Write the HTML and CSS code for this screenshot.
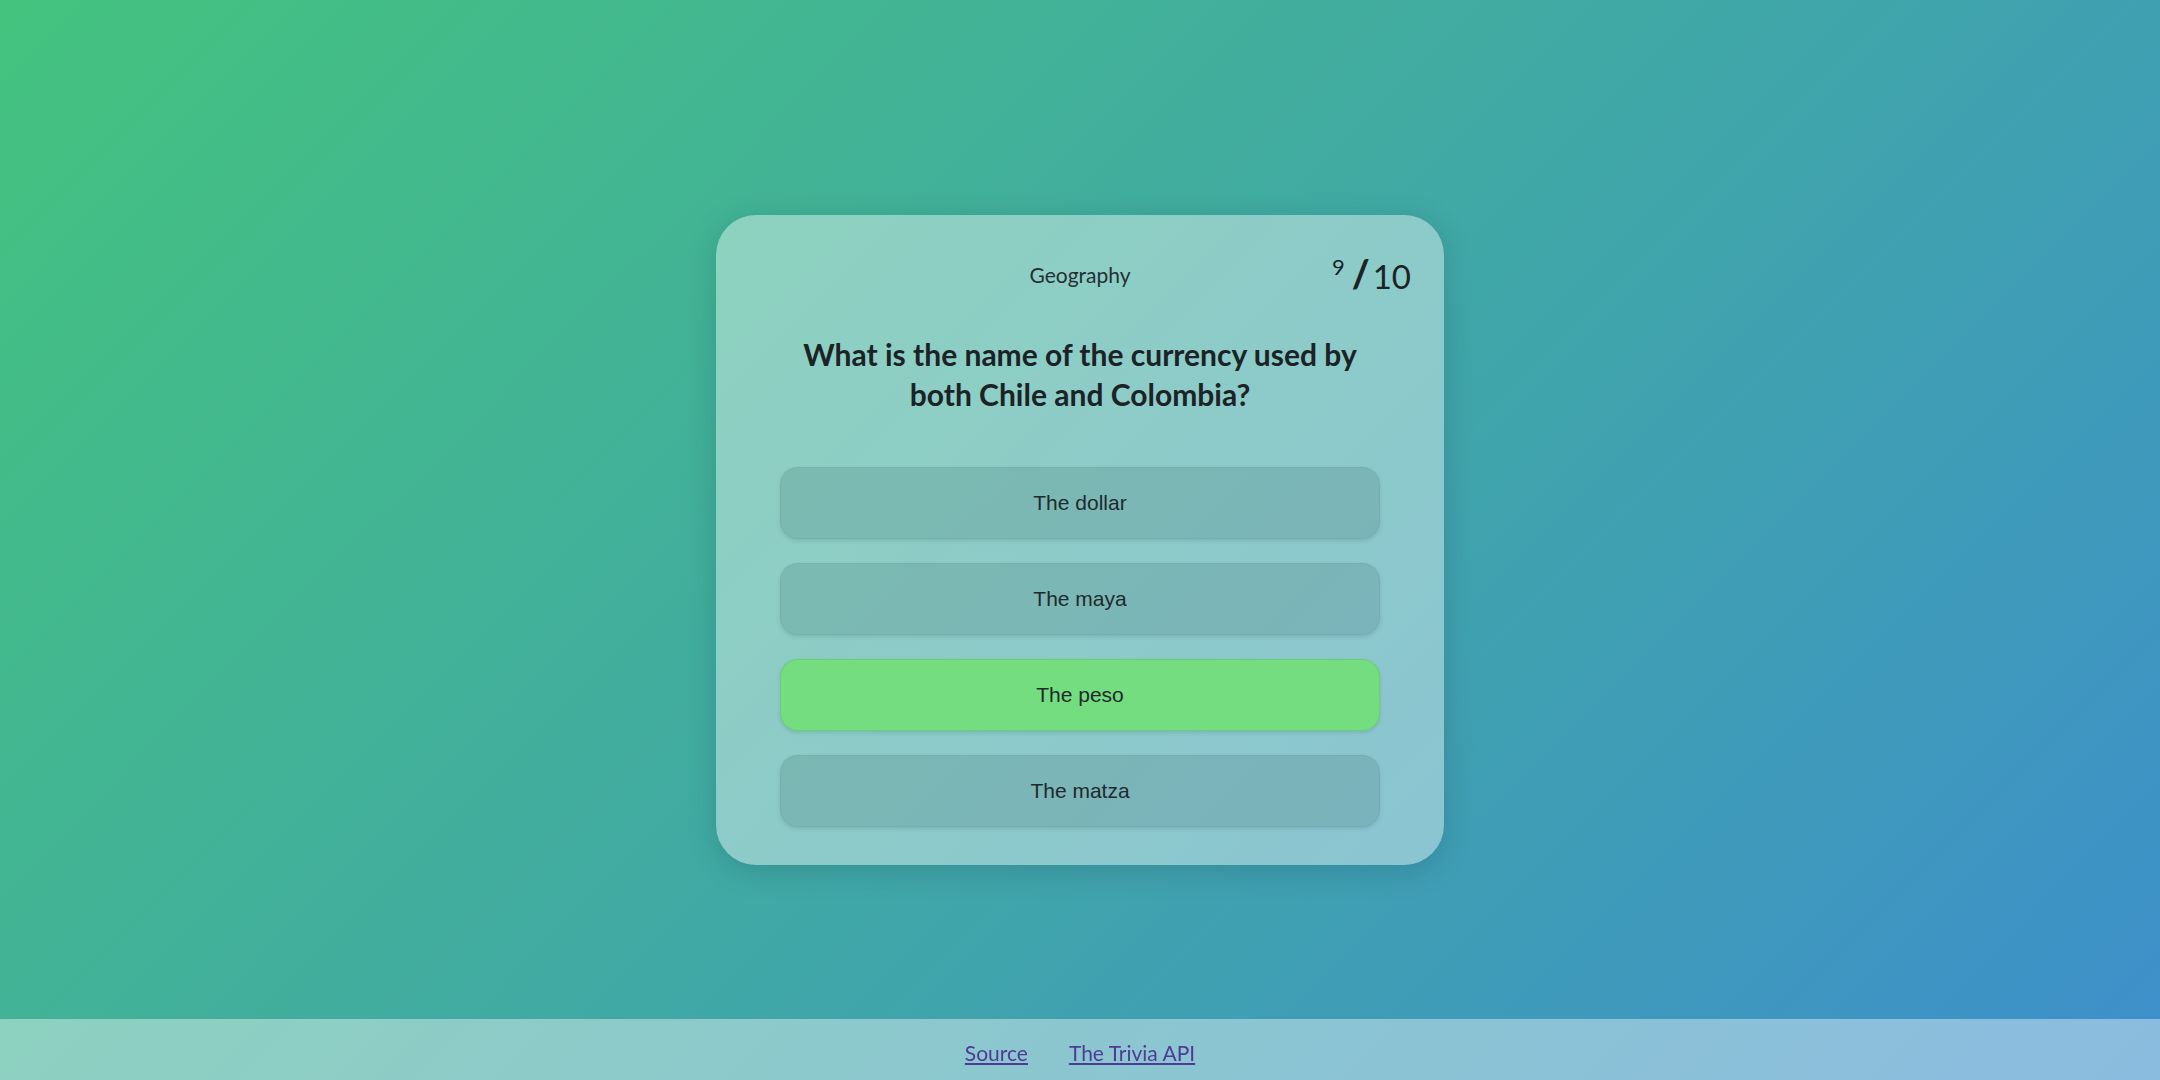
FILE: index.html
```html
<!DOCTYPE html>
<html lang="en">
<head>
<meta charset="utf-8">
<title>Trivia</title>
<link rel="stylesheet" href="styles.css">
</head>
<body>
<main class="stage">
  <section class="card">
    <header class="card-head">
      <span class="spacer"></span>
      <span class="category">Geography</span>
      <span class="score"><span class="cur">9</span><span class="slash">/</span><span class="total">10</span></span>
    </header>
    <h1 class="question">What is the name of the currency used by both Chile and Colombia?</h1>
    <div class="answers">
      <button class="answer">The dollar</button>
      <button class="answer">The maya</button>
      <button class="answer correct">The peso</button>
      <button class="answer">The matza</button>
    </div>
  </section>
</main>
<footer class="foot">
  <a class="foot-link" href="#">Source</a>
  <a class="foot-link" href="#">The Trivia API</a>
</footer>
</body>
</html>
```
FILE: styles.css
```css
html, body {
  margin: 0;
  padding: 0;
  height: 100%;
}
body {
  font-family: Lato, "Liberation Sans", sans-serif;
  color: #1b2326;
  background: linear-gradient(135deg, #44c37e 0%, #3d8fcb 100%);
  min-height: 100vh;
}
.stage {
  min-height: 100vh;
  display: flex;
  align-items: center;
  justify-content: center;
}
.card {
  width: 728px;
  box-sizing: border-box;
  padding: 41px 33px 38px;
  border-radius: 40px;
  background: rgba(255, 255, 255, 0.4);
  box-shadow: 0 6px 30px rgba(0, 40, 50, 0.18);
}
.card-head {
  display: grid;
  grid-template-columns: 1fr auto 1fr;
  align-items: center;
  height: 36px;
}
.category {
  font-size: 21px;
  color: #253033;
}
.score {
  justify-self: end;
  display: flex;
  align-items: flex-start;
  line-height: 1;
  color: #1b2326;
}
.cur {
  font-size: 22px;
  margin-top: 0;
  margin-right: 7px;
}
.slash {
  font-size: 38px;
  font-weight: 900;
  margin-top: -3px;
  margin-right: 3px;
}
.total {
  font-size: 33px;
  margin-top: 4px;
}
.question {
  margin: 42px 0 53px;
  padding: 0 36px;
  text-align: center;
  font-size: 30px;
  font-weight: 700;
  line-height: 40px;
  color: #1b2326;
}
.answers {
  display: flex;
  flex-direction: column;
  gap: 24px;
  padding: 0 31px;
}
.answer {
  height: 72px;
  border: 1px solid rgba(0, 0, 0, 0.04);
  border-radius: 18px;
  background: rgba(0, 40, 40, 0.12);
  box-shadow: 0 2px 4px rgba(0, 30, 40, 0.12);
  font-family: "Liberation Sans", Arial, sans-serif;
  font-size: 21px;
  color: #1f2a2d;
  cursor: pointer;
}
.answer.correct {
  background: #73dd80;
  border-color: rgba(0, 60, 20, 0.08);
}
.foot {
  position: fixed;
  left: 0;
  right: 0;
  bottom: 0;
  height: 61px;
  box-sizing: border-box;
  padding-top: 5px;
  display: flex;
  align-items: center;
  justify-content: center;
  gap: 41px;
  background: rgba(255, 255, 255, 0.4);
}
.foot-link {
  font-size: 21px;
  color: #4f3a96;
  text-decoration: underline;
}
```
